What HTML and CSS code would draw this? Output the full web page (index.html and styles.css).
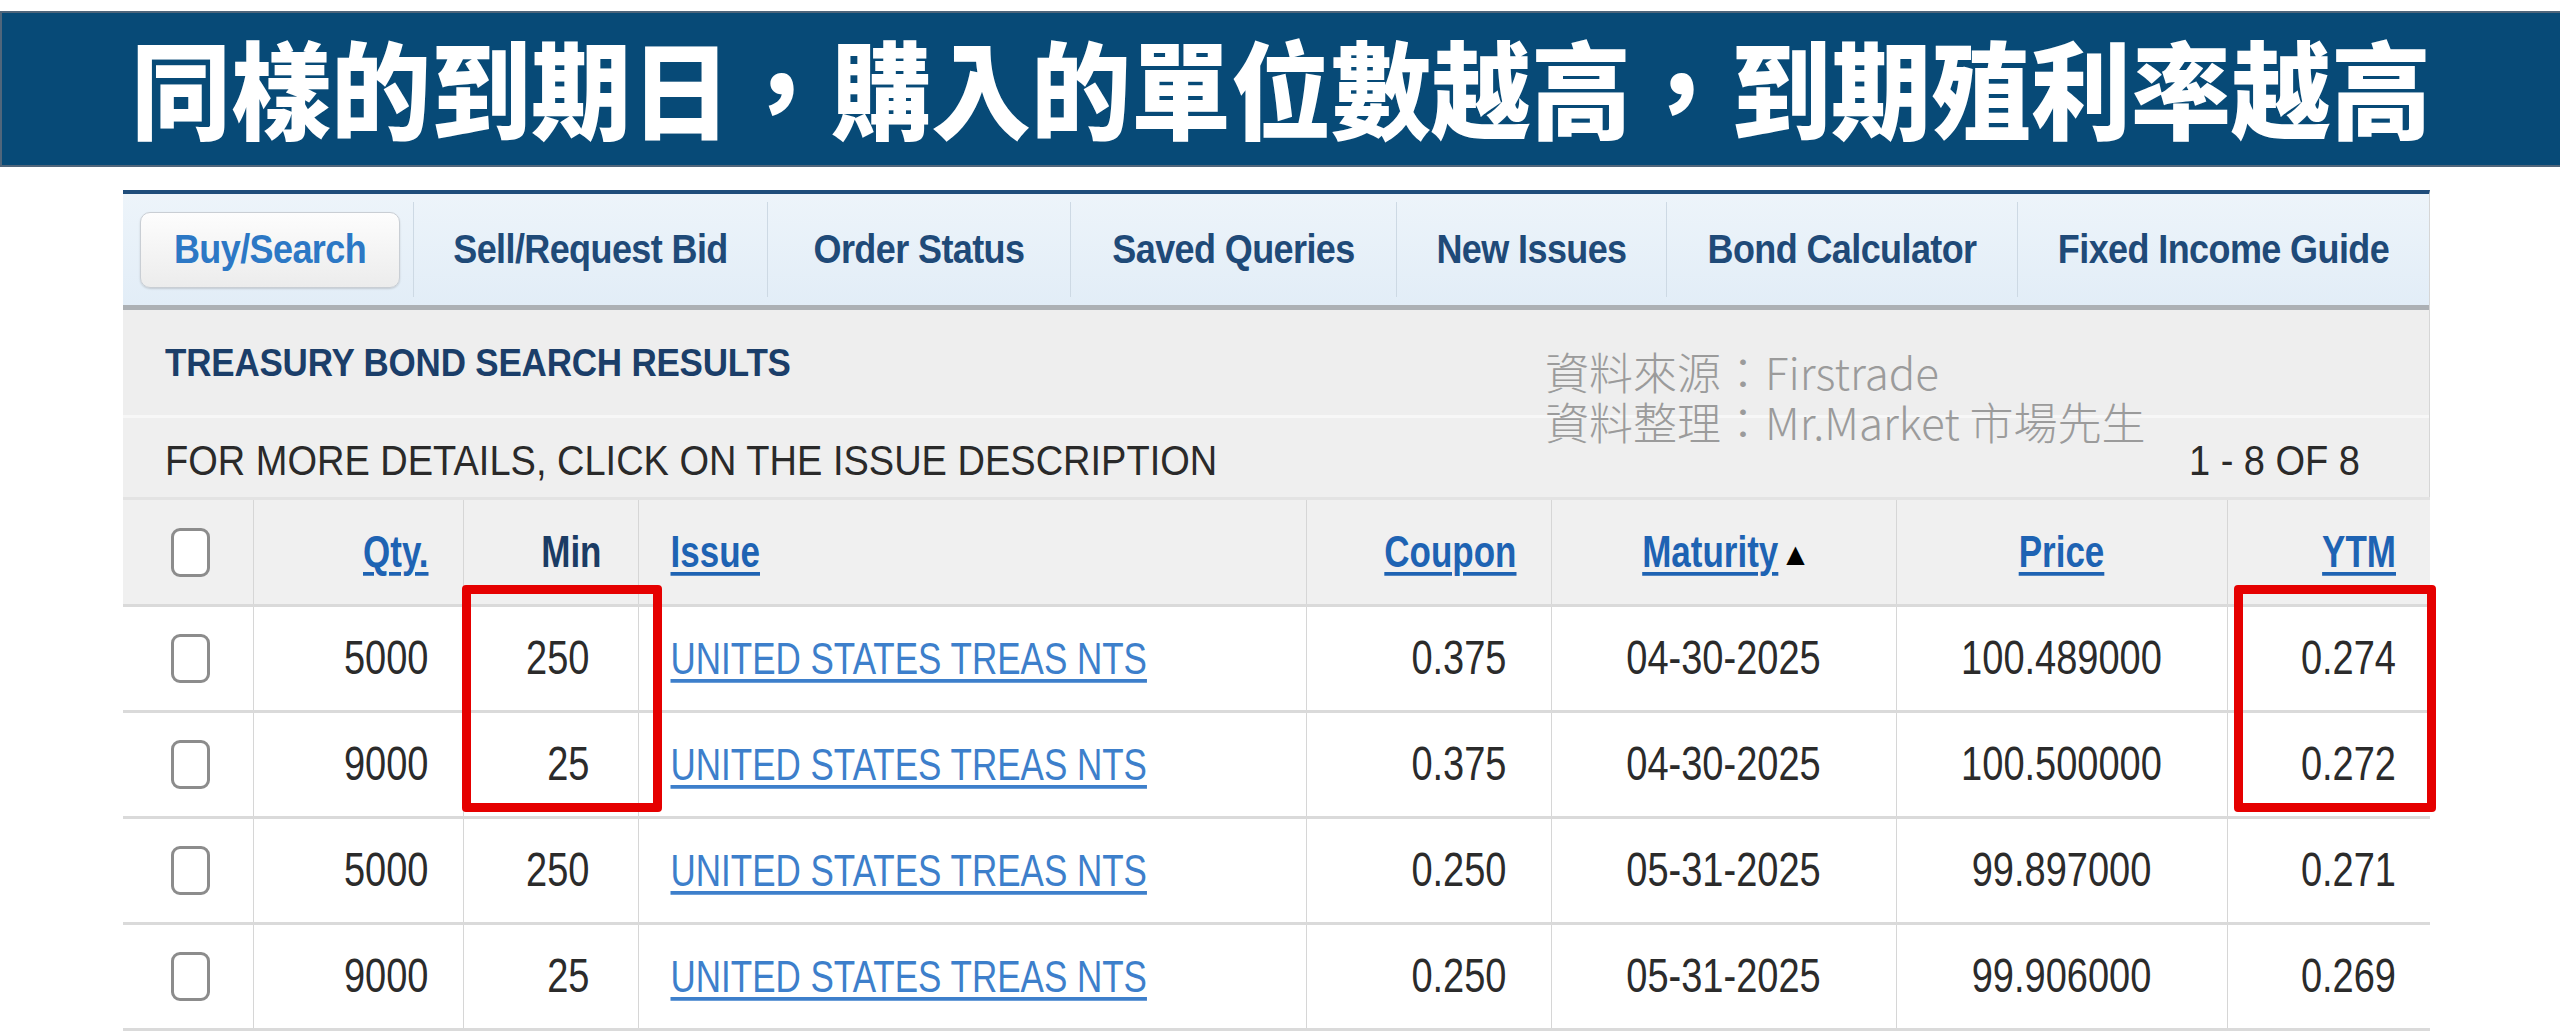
FILE: index.html
```html
<!DOCTYPE html>
<html lang="zh-Hant">
<head>
<meta charset="utf-8">
<title>同樣的到期日，購入的單位數越高，到期殖利率越高</title>
<link rel="stylesheet" href="styles.css">
</head>
<body>
<header class="banner">
  <h1 class="banner-title">同樣的到期日，購入的單位數越高，到期殖利率越高</h1>
</header>
<main class="panel">
  <nav class="tabs">
    <div class="tab tab-active"><span class="tab-btn"><span class="tx">Buy/Search</span></span></div>
    <div class="tab"><span class="tx">Sell/Request Bid</span></div>
    <div class="tab"><span class="tx">Order Status</span></div>
    <div class="tab"><span class="tx">Saved Queries</span></div>
    <div class="tab"><span class="tx">New Issues</span></div>
    <div class="tab"><span class="tx">Bond Calculator</span></div>
    <div class="tab"><span class="tx">Fixed Income Guide</span></div>
  </nav>
  <div class="results-title"><span class="tx">TREASURY BOND SEARCH RESULTS</span></div>
  <div class="results-info">
    <span class="tx">FOR MORE DETAILS, CLICK ON THE ISSUE DESCRIPTION</span>
    <span class="tx">1 - 8 OF 8</span>
  </div>
  <table class="bonds">
    <colgroup>
      <col class="c-chk"><col class="c-qty"><col class="c-min"><col class="c-issue">
      <col class="c-coupon"><col class="c-mat"><col class="c-price"><col class="c-ytm">
    </colgroup>
    <thead>
      <tr>
        <th class="chk"><span class="box"></span></th>
        <th class="r"><a class="lnk tx" href="#">Qty.</a></th>
        <th class="r min-h"><span class="tx">Min</span></th>
        <th class="l"><a class="lnk tx" href="#">Issue</a></th>
        <th class="r"><a class="lnk tx" href="#">Coupon</a></th>
        <th class="c"><a class="lnk tx" href="#">Maturity</a><span class="arrow">▲</span></th>
        <th class="c"><a class="lnk tx" href="#">Price</a></th>
        <th class="r"><a class="lnk tx" href="#">YTM</a></th>
      </tr>
    </thead>
    <tbody>
      <tr>
        <td class="chk"><span class="box"></span></td>
        <td class="r"><span class="tx">5000</span></td>
        <td class="r min-d"><span class="tx">250</span></td>
        <td class="l"><a class="issue tx" href="#">UNITED STATES TREAS NTS</a></td>
        <td class="r cp"><span class="tx">0.375</span></td>
        <td class="c"><span class="tx">04-30-2025</span></td>
        <td class="c"><span class="tx">100.489000</span></td>
        <td class="r"><span class="tx">0.274</span></td>
      </tr>
      <tr>
        <td class="chk"><span class="box"></span></td>
        <td class="r"><span class="tx">9000</span></td>
        <td class="r min-d"><span class="tx">25</span></td>
        <td class="l"><a class="issue tx" href="#">UNITED STATES TREAS NTS</a></td>
        <td class="r cp"><span class="tx">0.375</span></td>
        <td class="c"><span class="tx">04-30-2025</span></td>
        <td class="c"><span class="tx">100.500000</span></td>
        <td class="r"><span class="tx">0.272</span></td>
      </tr>
      <tr>
        <td class="chk"><span class="box"></span></td>
        <td class="r"><span class="tx">5000</span></td>
        <td class="r min-d"><span class="tx">250</span></td>
        <td class="l"><a class="issue tx" href="#">UNITED STATES TREAS NTS</a></td>
        <td class="r cp"><span class="tx">0.250</span></td>
        <td class="c"><span class="tx">05-31-2025</span></td>
        <td class="c"><span class="tx">99.897000</span></td>
        <td class="r"><span class="tx">0.271</span></td>
      </tr>
      <tr>
        <td class="chk"><span class="box"></span></td>
        <td class="r"><span class="tx">9000</span></td>
        <td class="r min-d"><span class="tx">25</span></td>
        <td class="l"><a class="issue tx" href="#">UNITED STATES TREAS NTS</a></td>
        <td class="r cp"><span class="tx">0.250</span></td>
        <td class="c"><span class="tx">05-31-2025</span></td>
        <td class="c"><span class="tx">99.906000</span></td>
        <td class="r"><span class="tx">0.269</span></td>
      </tr>
    </tbody>
  </table>
  <div class="watermark">
    <div>資料來源：Firstrade</div>
    <div>資料整理：Mr.Market 市場先生</div>
  </div>
  <div class="highlight hl-min"></div>
  <div class="highlight hl-ytm"></div>
</main>
</body>
</html>
```
FILE: styles.css
```css
html, body {
  margin: 0;
  padding: 0;
  background: #ffffff;
  overflow: hidden;
}
body {
  width: 2560px;
  height: 1033px;
  font-family: "Liberation Sans", Arial, sans-serif;
  padding-top: 11px;
  box-sizing: border-box;
}

/* ---------- banner ---------- */
.banner {
  height: 156px;
  background: #074a77;
  border: 2px solid #50667b;
  border-right: none;
  box-sizing: border-box;
  display: flex;
  align-items: center;
  justify-content: center;
}
.banner-title {
  margin: 0;
  padding-bottom: 6px;
  color: #ffffff;
  font-family: "Noto Sans CJK TC", "Noto Sans CJK SC", sans-serif;
  font-weight: 900;
  font-size: 100px;
  line-height: 1.3;
  letter-spacing: 0;
  white-space: nowrap;
  transform: scaleY(1.06);
}

/* ---------- panel ---------- */
.panel {
  position: relative;
  margin: 23px 0 0 123px;
  width: 2307px;
  border-top: 4px solid #1f4d7b;
  border-right: 1px solid #d6d6d6;
  box-sizing: border-box;
}
.tx {
  display: inline-block;
  transform: scaleY(1.12);
}

/* tabs */
.tabs {
  display: grid;
  grid-template-columns: 290px 354px 303px 326px 270px 351px 1fr;
  height: 111px;
  background: linear-gradient(#edf4fa, #e2edf7);
  border-bottom: 5px solid #acb0b4;
}
.tab {
  display: flex;
  align-items: center;
  justify-content: center;
  font-weight: bold;
  font-size: 36px;
  letter-spacing: -0.6px;
  color: #1f4a78;
  border-left: 1px solid #cdd9e4;
  margin: 8px 0;
}
.tab:first-child {
  border-left: none;
  justify-content: flex-start;
  padding-left: 17px;
}
.tab-btn {
  display: flex;
  align-items: center;
  justify-content: center;
  width: 260px;
  height: 76px;
  box-sizing: border-box;
  border: 1px solid #c9ced4;
  border-radius: 10px;
  background: linear-gradient(#fdfdfd, #ececec);
  box-shadow: 0 1px 2px rgba(0,0,0,0.15);
  color: #2c78c5;
}

/* result header rows */
.results-title {
  height: 105px;
  background: #eeeeee;
  display: flex;
  align-items: center;
  padding-left: 42px;
  font-weight: bold;
  font-size: 35px;
  color: #1b3e69;
  letter-spacing: -0.2px;
}
.results-info {
  height: 82px;
  box-sizing: border-box;
  background: #efefef;
  border-top: 3px solid #f7f7f7;
  display: flex;
  align-items: center;
  justify-content: space-between;
  padding: 6px 69px 0 42px;
  font-size: 38px;
  color: #2a2a2a;
}

/* table */
.bonds {
  width: 100%;
  table-layout: fixed;
  border-collapse: collapse;
  font-size: 38px;
  color: #2b2b2b;
}
.c-chk { width: 130px; }
.c-qty { width: 210px; }
.c-min { width: 175px; }
.c-issue { width: 668px; }
.c-coupon { width: 245px; }
.c-mat { width: 345px; }
.c-price { width: 331px; }
.c-ytm { width: 203px; }

.bonds thead tr {
  background: #f0f0f0;
  height: 107px;
  border-top: 3px solid #e3e3e3;
}
.bonds tbody tr {
  background: #ffffff;
  height: 106px;
  border-top: 3px solid #dadada;
}
.bonds tbody tr:last-child {
  border-bottom: 3px solid #dadada;
}
.bonds th, .bonds td {
  padding: 0;
  border-left: 1px solid #d6d6d6;
  vertical-align: middle;
  white-space: nowrap;
}
.bonds th:first-child, .bonds td:first-child { border-left: none; }
.bonds th {
  font-size: 35px;
  font-weight: bold;
}
.bonds .tx { transform: scaleY(1.25); }
.r { text-align: right; padding-right: 34px !important; }
.l { text-align: left; padding-left: 32px !important; }
.c { text-align: center; }
.chk { text-align: center; }
.min-h { padding-right: 36px !important; color: #1b3c64; }
.min-d { padding-right: 48px !important; }
.cp { padding-right: 44px !important; }

.box {
  display: inline-block;
  vertical-align: middle;
  width: 39px;
  height: 49px;
  box-sizing: border-box;
  border: 3px solid #8c8c8c;
  border-radius: 9px;
  background: #ffffff;
  margin-left: 6px;
}
.lnk {
  color: #1e63b3;
  text-decoration: underline;
  text-decoration-thickness: 3px;
  text-underline-offset: 4px;
}
.issue {
  color: #3d7fcb;
  font-size: 35px;
  text-decoration: underline;
  text-decoration-thickness: 3px;
  text-underline-offset: 4px;
}
.arrow {
  font-family: "DejaVu Sans", sans-serif;
  font-size: 24px;
  color: #000000;
  margin-left: 8px;
  vertical-align: 2px;
}

/* overlays */
.watermark {
  position: absolute;
  left: 1422px;
  top: 152px;
  font-family: "Noto Sans CJK TC", "Noto Sans CJK SC", sans-serif;
  font-weight: 300;
  font-size: 44px;
  line-height: 50px;
  color: #9b9b9b;
}
.highlight {
  position: absolute;
  top: 391px;
  height: 227px;
  box-sizing: border-box;
  border: 9px solid #e50000;
  border-radius: 4px;
}
.hl-min { left: 339px; width: 200px; }
.hl-ytm { left: 2111px; width: 202px; }
```
